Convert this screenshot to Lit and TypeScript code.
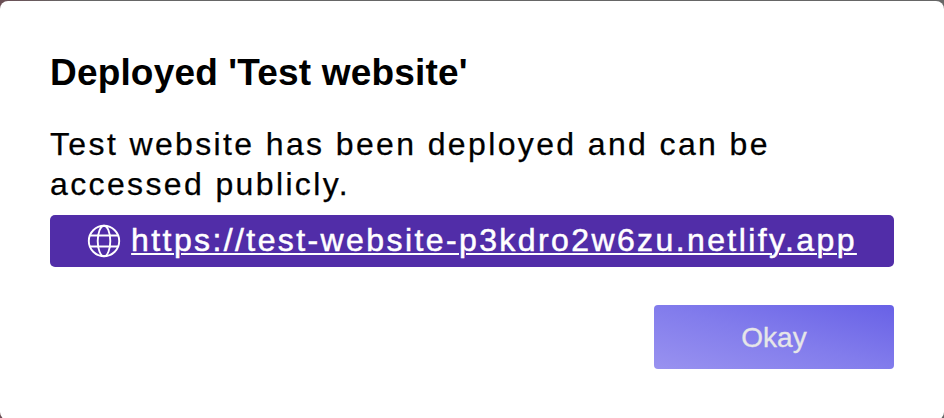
import { LitElement, html, css } from "lit";
import { customElement } from "lit/decorators.js";

@customElement("app-root")
export class AppRoot extends LitElement {
  static styles = css`
    :host {
      display: block;
      height: 418px;
      overflow: hidden;
      box-sizing: border-box;
      padding-top: 1px;
      background: linear-gradient(90deg, #6b4f55 0, #666 70px, #666 100%);
      font-family: "Liberation Sans", Arial, sans-serif;
      color: #000;
    }
    .dialog {
      box-sizing: border-box;
      height: 419px;
      padding: 48px 50px 0;
      background: #fff;
      border-radius: 8px;
      display: flex;
      flex-direction: column;
    }
    .title {
      margin: 0;
      font-size: 37px;
      line-height: 48px;
      font-weight: 700;
      letter-spacing: 0.17px;
      white-space: nowrap;
    }
    .message {
      margin: 27px 0 0;
      font-size: 32px;
      line-height: 40px;
      letter-spacing: 2.37px;
      -webkit-text-stroke: 0.25px currentColor;
    }
    .link {
      margin-top: 11px;
      height: 52px;
      box-sizing: border-box;
      flex: none;
      border-radius: 5px;
      background: #512da8;
      color: #fff;
      display: flex;
      align-items: center;
      justify-content: center;
      gap: 10px;
      font-size: 32px;
      line-height: 40px;
      letter-spacing: 2.4px;
      text-decoration: none;
    }
    .globe {
      width: 34px;
      height: 34px;
      flex: none;
      fill: none;
      stroke: #fff;
      stroke-width: 1.9;
    }
    .url {
      padding-bottom: 2px;
      text-decoration: underline;
      text-decoration-thickness: 2px;
      text-underline-offset: 2px;
      white-space: nowrap;
      -webkit-text-stroke: 0.5px currentColor;
    }
    .okay {
      margin: 38px 0 0;
      align-self: flex-end;
      width: 240px;
      height: 64px;
      padding: 2px 0 0;
      border: 0;
      border-radius: 4px;
      background: linear-gradient(to top right, #9992f0, #827cec 50%, #6861e6);
      color: #e6e6e8;
      font: 28px/32px "Liberation Sans", Arial, sans-serif;
      -webkit-text-stroke: 0.3px currentColor;
    }
  `;

  render() {
    return html`
      <section class="dialog" role="dialog">
        <h1 class="title">Deployed 'Test website'</h1>
        <p class="message">
          Test website has been deployed and can be accessed publicly.
        </p>
        <a class="link" href="#">
          <svg class="globe" viewBox="0 0 34 34">
            <circle cx="17" cy="17" r="15.2" />
            <ellipse cx="17" cy="17" rx="6.3" ry="15.2" />
            <path d="M3 11.5h28M3 22.5h28" />
          </svg>
          <span class="url">https://test-website-p3kdro2w6zu.netlify.app</span>
        </a>
        <button class="okay">Okay</button>
      </section>
    `;
  }
}
